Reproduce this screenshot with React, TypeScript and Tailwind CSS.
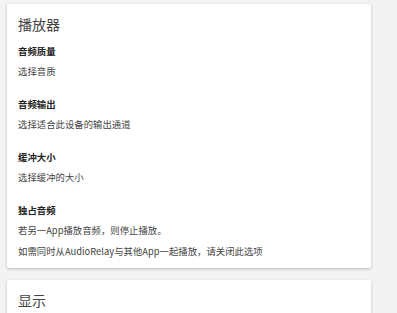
import React from "react";

const font = { fontFamily: '"Noto Sans CJK SC", "Noto Sans", sans-serif' };

function Item({ title, desc, first }: { title: string; desc: string[]; first?: boolean }) {
  return (
    <div className={first ? "mt-[10px]" : "mt-[19px]"}>
      <div className="text-[9.4px] leading-[14px] font-semibold text-[#222]">{title}</div>
      {desc.map((d, i) => (
        <div key={i} className={`text-[9.4px] leading-[14px] text-[#444] ${i === 0 ? "mt-[6px]" : "mt-[7px]"}`}>
          {d}
        </div>
      ))}
    </div>
  );
}

export default function App() {
  return (
    <div className="w-[397px] h-[313px] bg-[#f3f3f3] overflow-hidden" style={font}>
      <div className="flex flex-col gap-[12px] pt-[4px] pl-[7px] w-[371px]">
        <div className="bg-white rounded-[2px] shadow-[0_1px_3px_rgba(0,0,0,0.25)] px-[11px] pt-[10px] pb-[10px]">
          <div className="text-[14px] leading-[20px] font-normal text-[#444]">播放器</div>
          <Item first title="音频质量" desc={["选择音质"]} />
          <Item title="音频输出" desc={["选择适合此设备的输出通道"]} />
          <Item title="缓冲大小" desc={["选择缓冲的大小"]} />
          <Item
            title="独占音频"
            desc={["若另一App播放音频，则停止播放。", "如需同时从AudioRelay与其他App一起播放，请关闭此选项"]}
          />
        </div>
        <div className="bg-white rounded-[2px] shadow-[0_1px_3px_rgba(0,0,0,0.25)] px-[11px] pt-[10px] h-[60px]">
          <div className="text-[14px] leading-[20px] font-normal text-[#444]">显示</div>
        </div>
      </div>
    </div>
  );
}
